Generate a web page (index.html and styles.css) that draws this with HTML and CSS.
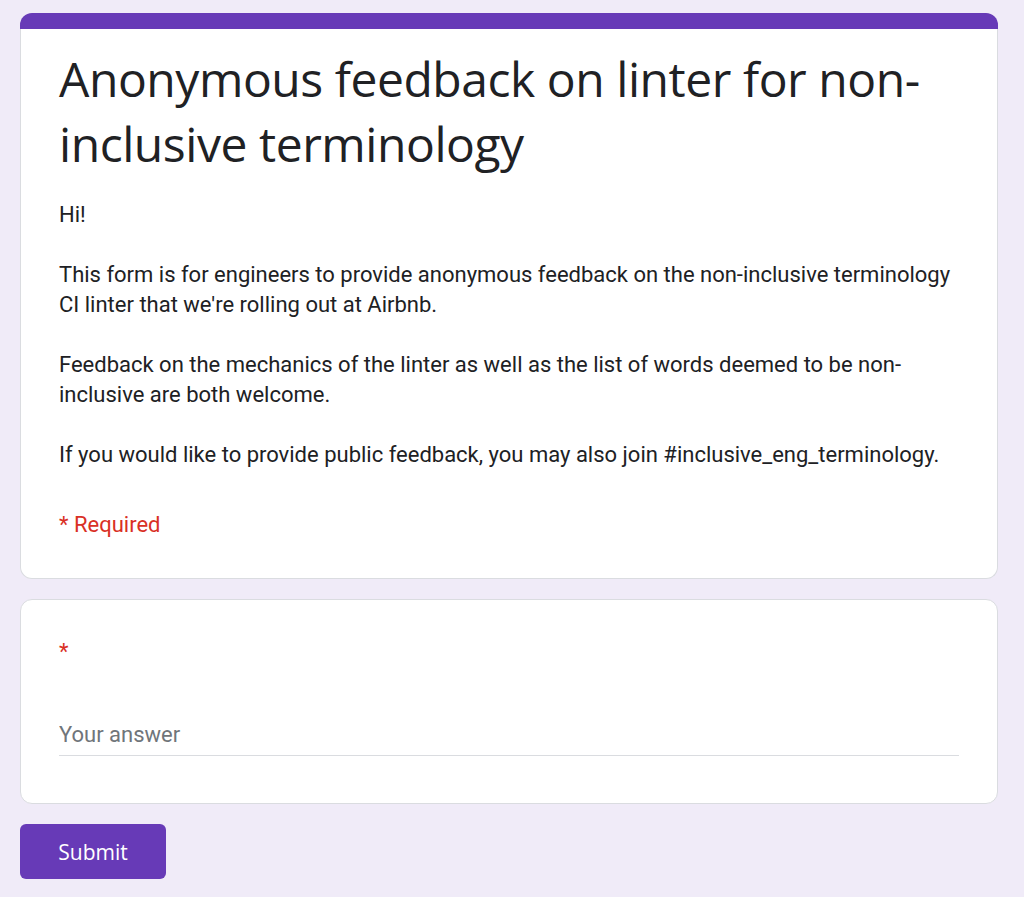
FILE: index.html
```html
<!DOCTYPE html>
<html lang="en">
<head>
<meta charset="utf-8">
<title>Anonymous feedback on linter for non-inclusive terminology</title>
<link rel="stylesheet" href="styles.css">
</head>
<body>
<main class="form">
  <section class="header-card">
    <div class="header-bar"></div>
    <div class="header-body">
      <h1 class="title">Anonymous feedback on linter for non-inclusive terminology</h1>
      <div class="description">
        <p>Hi!</p>
        <p>This form is for engineers to provide anonymous feedback on the non-inclusive terminology CI linter that we're rolling out at Airbnb.</p>
        <p>Feedback on the mechanics of the linter as well as the list of words deemed to be non-inclusive are both welcome.</p>
        <p>If you would like to provide public feedback, you may also join #inclusive_eng_terminology.</p>
      </div>
      <div class="required-note">* Required</div>
    </div>
  </section>

  <section class="question-card">
    <div class="question-label"><span class="asterisk">*</span></div>
    <div class="answer">
      <input class="answer-input" type="text" placeholder="Your answer">
    </div>
  </section>

  <div class="actions">
    <button class="submit" type="button">Submit</button>
  </div>
</main>
</body>
</html>
```

FILE: styles.css
```css
html, body {
  margin: 0;
  padding: 0;
}

body {
  background: #f0ebf8;
  font-family: "Roboto", "Liberation Sans", Arial, sans-serif;
  color: #202124;
}

.form {
  width: 978px;
  margin-left: 20px;
  padding-top: 13px;
  display: flex;
  flex-direction: column;
  gap: 20px;
}

.header-card {
  display: flex;
  flex-direction: column;
}

.header-bar {
  height: 16px;
  background: #673ab7;
  border-radius: 12px 12px 0 0;
}

.header-body {
  background: #fff;
  border: 1px solid #dadce0;
  border-top: none;
  border-radius: 0 0 12px 12px;
  padding: 17px 38px 38px;
}

.title {
  margin: 0;
  font-family: "Open Sans", "Noto Sans", sans-serif;
  font-weight: 400;
  font-size: 48px;
  line-height: 65px;
  color: #202124;
  letter-spacing: -0.45px;
}

.description {
  margin-top: 24px;
  font-size: 22px;
  line-height: 30px;
}

.description p {
  margin: 0 0 30px;
}

.description p:last-child {
  margin-bottom: 0;
}

.required-note {
  margin-top: 40px;
  font-size: 22px;
  line-height: 30px;
  color: #d93025;
}

.question-card {
  background: #fff;
  border: 1px solid #dadce0;
  border-radius: 12px;
  padding: 37px 38px 47px;
}

.question-label {
  font-size: 22px;
  line-height: 30px;
}

.asterisk {
  color: #d93025;
}

.answer {
  margin-top: 53px;
  border-bottom: 1px solid #dadce0;
  padding-bottom: 5px;
}

.answer-input {
  display: block;
  width: 100%;
  box-sizing: border-box;
  border: none;
  outline: none;
  padding: 0;
  margin: 0;
  background: transparent;
  font-family: "Roboto", "Liberation Sans", Arial, sans-serif;
  font-size: 22px;
  line-height: 30px;
  height: 30px;
  color: #202124;
}

.answer-input::placeholder {
  color: #70757a;
  opacity: 1;
}

.actions {
  display: flex;
}

.submit {
  width: 146px;
  height: 55px;
  border: none;
  border-radius: 6px;
  background: #673ab7;
  color: #fff;
  font-family: "Open Sans", "Noto Sans", sans-serif;
  font-size: 21px;
  font-weight: 500;
  padding: 0;
  cursor: pointer;
}
```
